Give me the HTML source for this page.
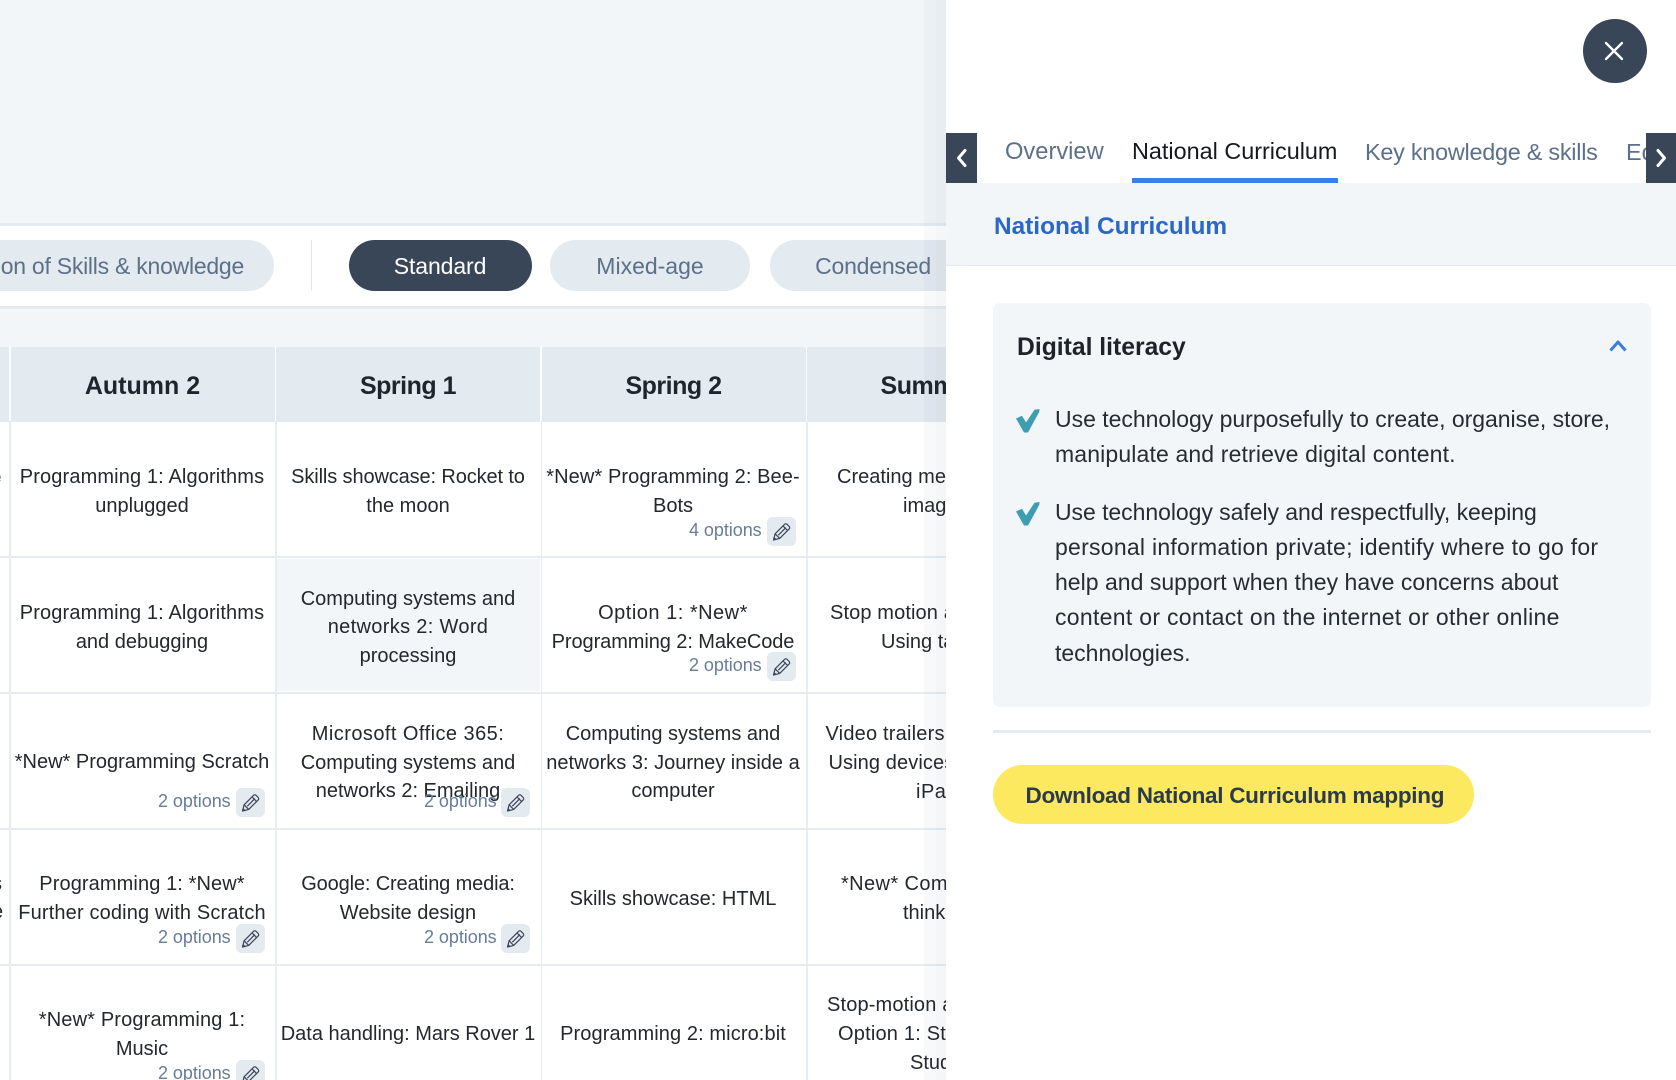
<!DOCTYPE html>
<html lang="en"><head><meta charset="utf-8"><title>National Curriculum</title>
<style>
html,body{margin:0;padding:0;background:#fff}
#p{position:relative;width:1676px;height:1080px;overflow:hidden;background:#fff;font-family:"Liberation Sans",sans-serif;color:#23282f}
#p div{position:absolute}
.vl{background:#e5edf3;width:1.6px;top:421px;height:659px}
.rl{background:#e5edf3;height:2px;left:0;width:946px}
.hd{top:347px;height:75px;line-height:78px;font-size:25px;font-weight:bold;text-align:center;background:#e3eaf0;color:#1f252c}
.c{width:264px;text-align:center;font-size:20px;line-height:28.6px;white-space:nowrap}
.l{font-size:20px;line-height:28.6px;white-space:nowrap}
.o{font-size:18px;line-height:24px;color:#677d9b;white-space:nowrap;letter-spacing:-.05px}
.b{width:29px;height:29px;border-radius:6px;background:#e3eaf0}
.b svg{display:block}
.pill{top:240px;height:51px;line-height:53px;border-radius:26px;background:#e3eaf0;color:#5d7089;font-size:23px;text-align:center;white-space:nowrap}
.tab{top:135px;line-height:32px;font-size:23.4px;white-space:nowrap;color:#5d7089}
.li{left:1055px;font-size:23px;line-height:35.2px;white-space:nowrap;color:#262c33}
</style></head><body><div id="p">
<svg width="0" height="0" style="position:absolute"><defs><symbol id="pen" viewBox="0 0 29 29"><path d="M6.500 23l1.600-6.200L17.600 7.300a1.700 1.700 0 0 1 2.400 0l2.200 2.200a1.700 1.700 0 0 1 0 2.400L12.700 21.400zM8.100 16.800l4.600 4.600M16 8.900l4.600 4.600M11.300 18.200l7.600-7.600" fill="none" stroke="#3a4658" stroke-width="1.200" stroke-linejoin="round"/><path d="M6.500 23l.7-3 2.300 2.300z" fill="#3a4658"/></symbol></defs></svg>

<div style="left:0;top:0;width:946px;height:223px;background:#f2f6f9"></div>
<div style="left:0;top:223px;width:946px;height:3px;background:#e5ecf1"></div>
<div style="left:0;top:306px;width:946px;height:3px;background:#e5ecf1"></div>
<div style="left:0;top:309px;width:946px;height:38px;background:#f2f6f9"></div>

<div class="pill" style="left:-60px;width:334px"><span style="position:absolute;right:30px;letter-spacing:-.25px">on of Skills &amp; knowledge</span></div>
<div style="left:311px;top:240px;width:1px;height:51px;background:#dfe6ed"></div>
<div class="pill" style="left:348.500px;width:183px;background:#384658;color:#fff;letter-spacing:-.1px">Standard</div>
<div class="pill" style="left:550px;width:200px">Mixed-age</div>
<div class="pill" style="left:769.500px;width:220px;text-indent:-13px;letter-spacing:-.2px">Condensed</div>

<div class="hd" style="left:0;width:9px"></div>
<div class="hd" style="left:10.500px;width:264px">Autumn 2</div>
<div class="hd" style="left:276px;width:264px;letter-spacing:-.5px">Spring 1</div>
<div class="hd" style="left:541.500px;width:264px;letter-spacing:-.5px">Spring 2</div>
<div class="hd" style="left:807px;width:264px;letter-spacing:-.5px">Summer 1</div>

<div style="left:277px;top:559px;width:263px;height:132px;background:#f2f6f9"></div>

<div class="rl" style="top:556px"></div>
<div class="rl" style="top:691.500px"></div>
<div class="rl" style="top:827.500px"></div>
<div class="rl" style="top:963.500px"></div>
<div class="vl" style="left:9px"></div>
<div class="vl" style="left:275px"></div>
<div class="vl" style="left:540.500px"></div>
<div class="vl" style="left:806px"></div>

<div class="l" style="left:0;top:463px;color:#8d97a3;font-size:14px;margin-left:-6px">e</div>
<div class="l" style="left:-8px;top:870px">s</div>
<div class="l" style="left:-8px;top:898px">e</div>

<!-- col 1 -->
<div class="c" style="left:10px;top:463px"><span style="letter-spacing:.13px">Programming 1: Algorithms</span><br>unplugged</div>
<div class="c" style="left:10px;top:599px"><span style="letter-spacing:.13px">Programming 1: Algorithms</span><br>and debugging</div>
<div class="c" style="left:10px;top:748px">*New* Programming Scratch</div>
<div class="c" style="left:10px;top:870px"><span style="letter-spacing:.1px">Programming 1: *New*</span><br><span style="letter-spacing:.15px">Further coding with Scratch</span></div>
<div class="c" style="left:10px;top:1006px"><span style="letter-spacing:.15px">*New* Programming 1:</span><br>Music</div>
<!-- col 2 -->
<div class="c" style="left:276px;top:463px"><span style="letter-spacing:-.12px">Skills showcase: Rocket to</span><br>the moon</div>
<div class="c" style="left:276px;top:584.500px">Computing systems and<br><span style="letter-spacing:.33px">networks 2: Word</span><br>processing</div>
<div class="c" style="left:276px;top:720px"><span style="letter-spacing:.45px">Microsoft Office 365:</span><br>Computing systems and<br>networks 2: Emailing</div>
<div class="c" style="left:276px;top:870px"><span style="letter-spacing:-.14px">Google: Creating media:</span><br>Website design</div>
<div class="c" style="left:276px;top:1020px">Data handling: Mars Rover 1</div>
<!-- col 3 -->
<div class="c" style="left:541px;top:463px"><span style="letter-spacing:.09px">*New* Programming 2: Bee-</span><br>Bots</div>
<div class="c" style="left:541px;top:599px"><span style="letter-spacing:.5px">Option 1: *New*</span><br><span style="letter-spacing:-.08px">Programming 2: MakeCode</span></div>
<div class="c" style="left:541px;top:720px">Computing systems and<br>networks 3: Journey inside a<br>computer</div>
<div class="c" style="left:541px;top:885px">Skills showcase: HTML</div>
<div class="c" style="left:541px;top:1020px"><span style="letter-spacing:.1px">Programming 2: micro:bit</span></div>
<!-- col 4 -->
<div class="l" style="left:837px;top:463px">Creating media: Digital</div>
<div class="l" style="left:903px;top:492px">imagery</div>
<div class="l" style="left:830px;top:599px;letter-spacing:.12px">Stop motion animation:</div>
<div class="l" style="left:881px;top:628px">Using tablets</div>
<div class="l" style="left:825.500px;top:720px;letter-spacing:.2px">Video trailers Option 1:</div>
<div class="l" style="left:828.500px;top:749px;letter-spacing:.1px">Using devices such as</div>
<div class="l" style="left:916px;top:778px;letter-spacing:.5px">iPads</div>
<div class="l" style="left:841px;top:870px;letter-spacing:.4px">*New* Computational</div>
<div class="l" style="left:903px;top:899px">thinking</div>
<div class="l" style="left:827px;top:991px;letter-spacing:.15px">Stop-motion animation</div>
<div class="l" style="left:838px;top:1020px;letter-spacing:.2px">Option 1: Stop-motion</div>
<div class="l" style="left:910px;top:1049px">Studio</div>

<!-- options -->
<div class="o" style="left:689px;top:518px">4 options</div>
<div class="b" style="left:767px;top:517px"><svg width="29" height="29"><use href="#pen"/></svg></div>
<div class="o" style="left:689px;top:653px">2 options</div>
<div class="b" style="left:767px;top:652px"><svg width="29" height="29"><use href="#pen"/></svg></div>
<div class="o" style="left:158px;top:789px">2 options</div>
<div class="b" style="left:235.500px;top:788px"><svg width="29" height="29"><use href="#pen"/></svg></div>
<div class="o" style="left:424px;top:789px">2 options</div>
<div class="b" style="left:501px;top:788px"><svg width="29" height="29"><use href="#pen"/></svg></div>
<div class="o" style="left:158px;top:925px">2 options</div>
<div class="b" style="left:235.500px;top:924px"><svg width="29" height="29"><use href="#pen"/></svg></div>
<div class="o" style="left:424px;top:925px">2 options</div>
<div class="b" style="left:501px;top:924px"><svg width="29" height="29"><use href="#pen"/></svg></div>
<div class="o" style="left:158px;top:1061px">2 options</div>
<div class="b" style="left:235.500px;top:1060px"><svg width="29" height="29"><use href="#pen"/></svg></div>

<!-- panel shadow -->
<div style="left:924px;top:0;width:12px;height:1080px;background:rgba(70,90,115,.04)"></div>
<div style="left:936px;top:0;width:10px;height:1080px;background:rgba(70,90,115,.055)"></div>

<!-- panel -->
<div style="left:946px;top:0;width:730px;height:1080px;background:#fff"></div>

<div style="left:1583px;top:19px;width:64px;height:64px;border-radius:50%;background:#384658"></div>
<svg style="position:absolute;left:1604px;top:41px" width="20" height="20" viewBox="0 0 20 20"><path d="M2 2L18 18M18 2L2 18" stroke="#fff" stroke-width="2.300" stroke-linecap="round" fill="none"/></svg>

<div class="tab" style="left:1005px;font-size:23.700px;top:136px">Overview</div>
<div class="tab" style="left:1132px;color:#15191e">National Curriculum</div>
<div class="tab" style="left:1365px;top:136px;letter-spacing:-.24px">Key knowledge &amp; skills</div>
<div class="tab" style="left:1626px;top:136px">Education</div>
<div style="left:1132px;top:178px;width:206px;height:5px;background:#3b80ea"></div>

<div style="left:946px;top:133px;width:31px;height:50px;background:#384658"></div>
<svg style="position:absolute;left:954px;top:147px" width="16" height="22" viewBox="0 0 16 22"><path d="M11 3.500L4.500 11 11 18.500" stroke="#fff" stroke-width="3" fill="none" stroke-linecap="round" stroke-linejoin="round"/></svg>
<div style="left:1646px;top:133px;width:30px;height:50px;background:#384658"></div>
<svg style="position:absolute;left:1653px;top:147px" width="16" height="22" viewBox="0 0 16 22"><path d="M5 3.500L11.500 11 5 18.500" stroke="#fff" stroke-width="3" fill="none" stroke-linecap="round" stroke-linejoin="round"/></svg>

<div style="left:946px;top:183px;width:730px;height:82px;background:#f2f6f9"></div>
<div style="left:946px;top:265px;width:730px;height:1px;background:#e5ebf0"></div>
<div style="left:994px;top:211px;line-height:32px;font-size:24.400px;font-weight:bold;color:#2a67c9;white-space:nowrap">National Curriculum</div>

<div style="left:993px;top:303px;width:657.500px;height:404px;background:#f2f6f9;border-radius:7px"></div>
<div style="left:1017px;top:332px;line-height:32px;font-size:24.700px;font-weight:bold;color:#1d2329;white-space:nowrap">Digital literacy</div>
<svg style="position:absolute;left:1607px;top:337px" width="22" height="17" viewBox="0 0 22 17"><path d="M3.500 13.500L11 5l7.500 8.500" stroke="#3b7de4" stroke-width="3" fill="none" stroke-linejoin="round"/></svg>

<svg style="position:absolute;left:1016px;top:409px" width="24" height="24" viewBox="0 0 24 24"><path d="M0 9.500L6 6.700 10 13.500 18.500 .8 23.500 0 23.300 2.800 12 23.500 8 23.500z" fill="#3f9db2"/></svg>
<svg style="position:absolute;left:1016px;top:502px" width="24" height="24" viewBox="0 0 24 24"><path d="M0 9.500L6 6.700 10 13.500 18.500 .8 23.500 0 23.300 2.800 12 23.500 8 23.500z" fill="#3f9db2"/></svg>

<div class="li" style="top:402px;letter-spacing:-.02px">Use technology purposefully to create, organise, store,</div>
<div class="li" style="top:437px;letter-spacing:.14px">manipulate and retrieve digital content.</div>
<div class="li" style="top:495px;letter-spacing:-.05px">Use technology safely and respectfully, keeping</div>
<div class="li" style="top:530px;letter-spacing:.26px">personal information private; identify where to go for</div>
<div class="li" style="top:565px;letter-spacing:.02px">help and support when they have concerns about</div>
<div class="li" style="top:600px;letter-spacing:.3px">content or contact on the internet or other online</div>
<div class="li" style="top:636px">technologies.</div>

<div style="left:993px;top:730px;width:657.500px;height:3px;background:#e5ecf1"></div>

<div style="left:993px;top:765px;width:481px;height:59px;border-radius:30px;background:#fce95f"></div>
<div style="left:1025.500px;top:780px;line-height:32px;font-size:22.500px;letter-spacing:-.28px;font-weight:bold;color:#2c3a4c;white-space:nowrap">Download National Curriculum mapping</div>

</div></body></html>
